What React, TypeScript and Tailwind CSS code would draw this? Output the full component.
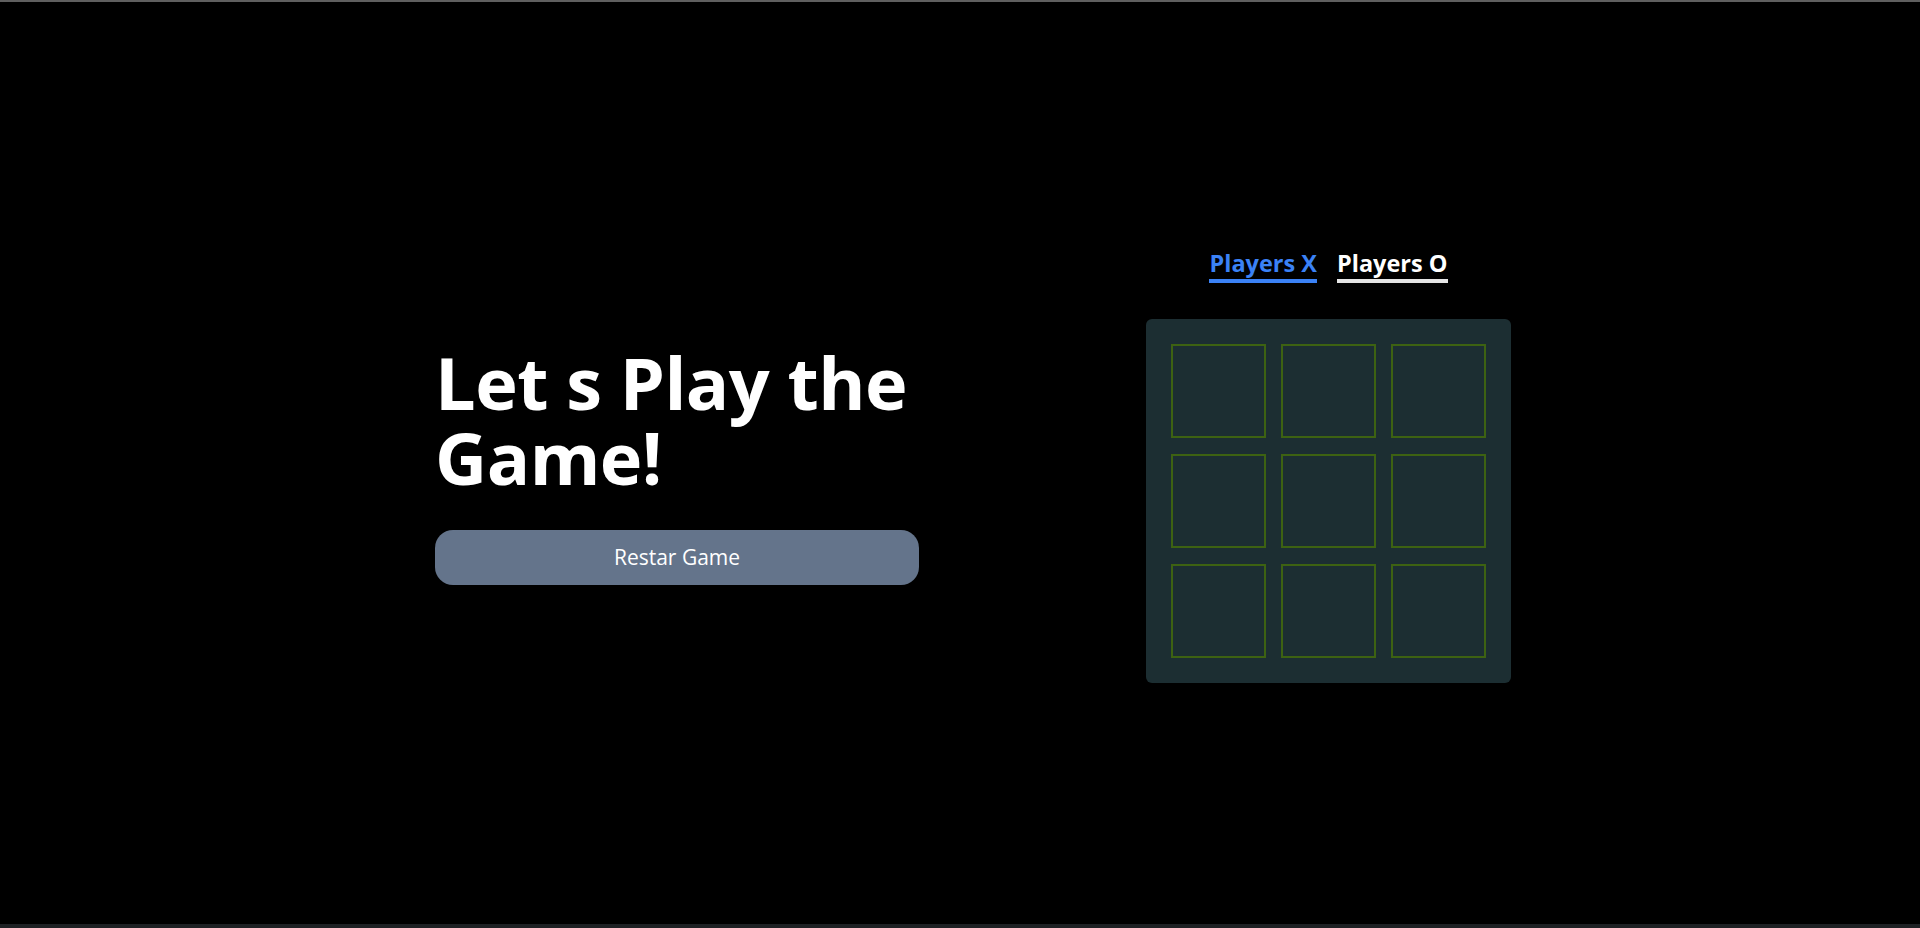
import React, { useState } from 'react';

type Cell = 'X' | 'O' | null;

const App = () => {
  const [board, setBoard] = useState<Cell[]>(Array(9).fill(null));
  const [turn, setTurn] = useState<'X' | 'O'>('X');

  const handleClick = (i: number) => {
    if (board[i]) return;
    const next = [...board];
    next[i] = turn;
    setBoard(next);
    setTurn(turn === 'X' ? 'O' : 'X');
  };

  const restart = () => {
    setBoard(Array(9).fill(null));
    setTurn('X');
  };

  return (
    <div
      className="h-[928px] w-full bg-black border-t-2 border-t-[#5f5f5f] border-b-4 border-b-[#1e2124] pt-[4px] overflow-hidden"
      style={{ fontFamily: '"Open Sans", "Noto Sans", sans-serif' }}
    >
      <div className="h-full flex items-center justify-center gap-[227px] pl-[26px]">
        {/* Left side */}
        <div className="w-[484px] flex flex-col">
          <h1 className="text-white font-bold text-[72px] leading-[75px] tracking-[-0.5px]">
            Let s Play the Game!
          </h1>
          <button
            onClick={restart}
            className="mt-[35px] w-full h-[55px] rounded-[18px] bg-[#64748b] text-white text-[21px]"
          >
            Restar Game
          </button>
        </div>

        {/* Right side */}
        <div className="w-[365px] flex flex-col items-center">
          <div className="flex gap-[20px]">
            <span
              className={
                turn === 'X'
                  ? 'text-[#3b82f6] border-b-4 border-[#3b82f6] font-bold text-[23.5px] leading-[31px]'
                  : 'text-white border-b-4 border-[#e5e5e5] font-bold text-[23.5px] leading-[31px]'
              }
            >
              Players X
            </span>
            <span
              className={
                turn === 'O'
                  ? 'text-[#3b82f6] border-b-4 border-[#3b82f6] font-bold text-[23.5px] leading-[31px]'
                  : 'text-white border-b-4 border-[#e5e5e5] font-bold text-[23.5px] leading-[31px]'
              }
            >
              Players O
            </span>
          </div>
          <div className="mt-[36px] w-[365px] h-[364px] bg-[#1c2e32] rounded-md p-[25px] grid grid-cols-3 gap-x-[15px] gap-y-[16px]">
            {board.map((cell, i) => (
              <div
                key={i}
                onClick={() => handleClick(i)}
                className="w-[95px] h-[94px] border-2 border-[#3d6212] flex items-center justify-center text-white text-5xl font-bold cursor-pointer"
              >
                {cell}
              </div>
            ))}
          </div>
        </div>
      </div>
    </div>
  );
};

export default App;
